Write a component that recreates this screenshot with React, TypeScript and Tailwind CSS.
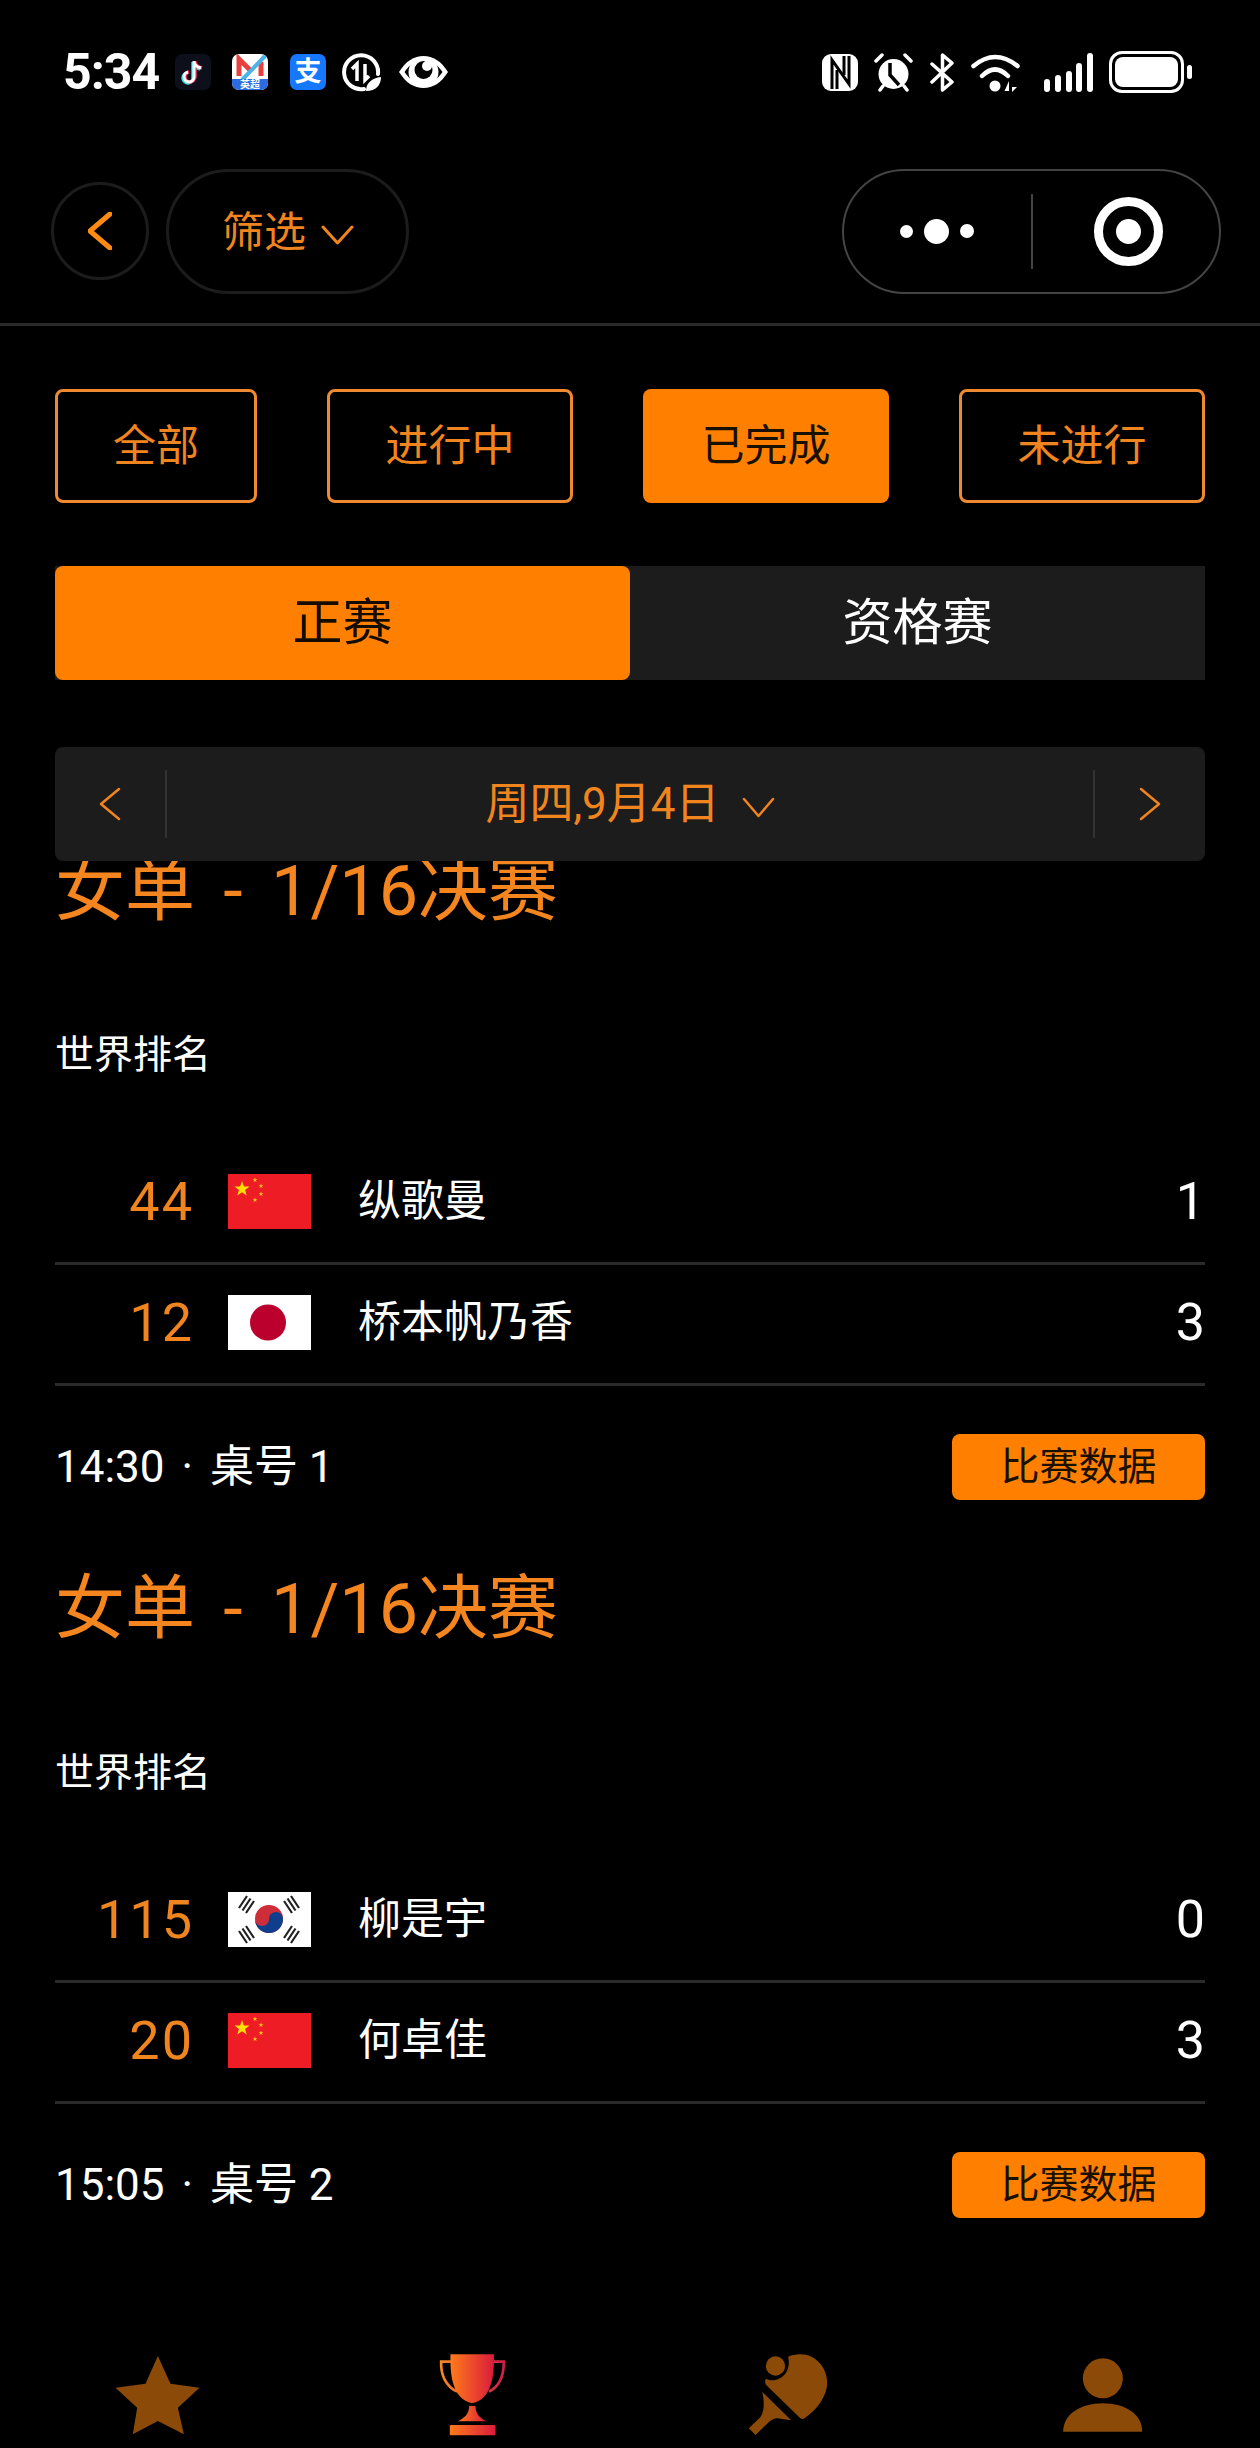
import React from 'react';

const sans = "font-['Roboto','Noto_Sans_CJK_SC',sans-serif]";

const starPoints = (cx: number, cy: number, r: number) => {
  const pts: string[] = [];
  for (let i = 0; i < 10; i++) {
    const rad = i % 2 === 0 ? r : r * 0.4;
    const a = (Math.PI / 5) * i - Math.PI / 2;
    pts.push(`${cx + rad * Math.cos(a)},${cy + rad * Math.sin(a)}`);
  }
  return pts.join(' ');
};

const ChinaFlag = () => (
  <svg width="83" height="55" viewBox="0 0 83 55" className="shrink-0 block">
    <rect width="83" height="55" fill="#ee1c25" />
    <polygon points={starPoints(14, 15, 8)} fill="#ffe000" />
    <polygon points={starPoints(27, 6, 2.6)} fill="#ffc21a" />
    <polygon points={starPoints(33, 12, 2.6)} fill="#ffc21a" />
    <polygon points={starPoints(33, 20, 2.6)} fill="#ffc21a" />
    <polygon points={starPoints(27, 26, 2.6)} fill="#ffc21a" />
  </svg>
);

const JapanFlag = () => (
  <svg width="83" height="55" viewBox="0 0 83 55" className="shrink-0 block">
    <rect width="83" height="55" fill="#fff" />
    <circle cx="40" cy="27.5" r="18" fill="#bc002d" />
  </svg>
);

const KoreaFlag = () => (
  <svg width="83" height="55" viewBox="0 0 83 55" className="shrink-0 block">
    <rect width="83" height="55" fill="#fff" />
    <circle cx="41" cy="27" r="14" fill="#cd2e3a" />
    <path d="M27 27a14 14 0 0 0 28 0c0-3.900-3.100-7-7-7s-7 3.100-7 7-3.100 7-7 7-7-3.100-7-7z" fill="#0f3f8c" />
    <g stroke="#222" strokeWidth="2.200">
      <path d="M12 17L20 5M15.500 19.500L23.500 7.500M19 22L27 10" transform="translate(-1 -1)" />
      <path d="M62 5L70 17M58.500 7.500L66.500 19.500M55 10L63 22" transform="translate(1 -1)" />
      <path d="M12 38L20 50M15.500 35.500L23.500 47.500M19 33L27 45" transform="translate(-1 1)" />
      <path d="M62 50L70 38M58.500 47.500L66.500 35.500M55 45L63 33" transform="translate(1 1)" />
    </g>
  </svg>
);

const flags = { cn: <ChinaFlag />, jp: <JapanFlag />, kr: <KoreaFlag /> };

type Player = { rank: string; flag: keyof typeof flags; name: string; score: string };
type Match = { time: string; table: string; players: Player[] };

const matches: Match[] = [
  {
    time: '14:30',
    table: '桌号 1',
    players: [
      { rank: '44', flag: 'cn', name: '纵歌曼', score: '1' },
      { rank: '12', flag: 'jp', name: '桥本帆乃香', score: '3' },
    ],
  },
  {
    time: '15:05',
    table: '桌号 2',
    players: [
      { rank: '115', flag: 'kr', name: '柳是宇', score: '0' },
      { rank: '20', flag: 'cn', name: '何卓佳', score: '3' },
    ],
  },
];

const Chevron = ({ dir, w, h, color = '#f0851f', sw = 3 }: { dir: 'left' | 'right' | 'down'; w: number; h: number; color?: string; sw?: number }) => {
  const d =
    dir === 'left'
      ? `M${w - 2} 2L2 ${h / 2}L${w - 2} ${h - 2}`
      : dir === 'right'
        ? `M2 2L${w - 2} ${h / 2}L2 ${h - 2}`
        : `M2 2L${w / 2} ${h - 2}L${w - 2} 2`;
  return (
    <svg width={w} height={h} viewBox={`0 0 ${w} ${h}`} fill="none" className="shrink-0">
      <path d={d} stroke={color} strokeWidth={sw} strokeLinecap="round" strokeLinejoin="round" />
    </svg>
  );
};

const StatusLeft = () => (
  <div className="flex items-center">
    <span className="w-[97px] text-[50px] leading-none font-bold text-white tracking-[-1px]">5:34</span>
    {/* tiktok */}
    <svg width="36" height="36" viewBox="0 0 36 36" fill="none" className="ml-[15px]">
      <rect width="36" height="36" rx="7" fill="#0d0f1a" />
      <path d="M19 7V23A5 5 0 1 1 13 18M19 7C19 11 22 13 26 14" stroke="#25e0e0" strokeWidth="3.500" transform="translate(-1 1)" />
      <path d="M19 7V23A5 5 0 1 1 13 18M19 7C19 11 22 13 26 14" stroke="#f0305a" strokeWidth="3.500" transform="translate(1 0)" />
      <path d="M19 7V23A5 5 0 1 1 13 18M19 7C19 11 22 13 26 14" stroke="#fff" strokeWidth="3" />
    </svg>
    {/* app with 英超 label */}
    <div className="ml-[21px] w-[36px] h-[36px] rounded-[7px] bg-white overflow-hidden flex flex-col relative">
      <svg width="36" height="25" viewBox="0 0 36 25" fill="none">
        <path d="M7 22V5L18 16" stroke="#e8403f" strokeWidth="5" />
        <path d="M29 22V8" stroke="#e8403f" strokeWidth="5" />
        <path d="M10 26L34 1" stroke="#48b4e8" strokeWidth="4" />
      </svg>
      <span className="flex-1 bg-[#2c6be0] text-white text-[10px] leading-[11px] font-bold text-center">英超</span>
    </div>
    {/* alipay */}
    <div className="ml-[22px] w-[36px] h-[36px] rounded-[7px] bg-[#1677ff] text-white text-[27px] leading-[36px] font-bold text-center">支</div>
    {/* data saver */}
    <svg width="39" height="39" viewBox="0 0 39 39" fill="none" className="ml-[16px]">
      <path d="M22 36A17 17 0 1 1 36 21" stroke="#fff" strokeWidth="4" strokeLinecap="round" />
      <path d="M15 28V11L10 16M23 11V27L27 23" stroke="#fff" strokeWidth="3.500" />
      <path d="M24 38C24 30 30 25 39 24C39 32 34 38 24 38Z" fill="#fff" />
    </svg>
    {/* eye */}
    <svg width="51" height="34" viewBox="0 0 51 34" className="ml-[17px]">
      <path d="M1 17C8 6 16 1 25.500 1S43 6 50 17C43 28 35 33 25.500 33S8 28 1 17Z" fill="#fff" />
      <path d="M6.500 17C12 9 18 5.500 25.500 5.500S39 9 44.500 17C39 25 33 28.500 25.500 28.500S12 25 6.500 17Z" fill="#000" />
      <circle cx="25.500" cy="17" r="15" fill="#fff" />
      <circle cx="25.500" cy="15" r="9" fill="#000" />
      <circle cx="29" cy="11" r="5" fill="#fff" />
    </svg>
  </div>
);

const StatusRight = () => (
  <div className="flex items-center">
    {/* nfc */}
    <svg width="36" height="37" viewBox="0 0 36 37" fill="none">
      <rect width="36" height="37" rx="9" fill="#fff" />
      <path d="M10 35V6L27 30V2" stroke="#000" strokeWidth="3" />
      <path d="M15 35V16M22 21V2" stroke="#000" strokeWidth="3" />
    </svg>
    {/* alarm */}
    <svg width="39" height="39" viewBox="0 0 39 39" fill="none" className="ml-[16px]">
      <circle cx="19.500" cy="21" r="15" fill="#fff" />
      <path d="M16 10V22L25 32" stroke="#000" strokeWidth="3.500" />
      <path d="M2 8L8 2M37 8L31 2M6 37L9 33M33 37L30 33" stroke="#fff" strokeWidth="3.500" strokeLinecap="round" />
    </svg>
    {/* bluetooth */}
    <svg width="25" height="39" viewBox="0 0 25 39" fill="none" className="ml-[17px]">
      <path d="M2 11L22 29L12.500 37V2L22 10L2 29" stroke="#fff" strokeWidth="3.500" strokeLinejoin="round" strokeLinecap="round" />
    </svg>
    {/* wifi */}
    <svg width="49" height="39" viewBox="0 0 49 39" fill="none" className="ml-[16px]">
      <path d="M2.500 13Q24 -5 46.500 13M11 23Q24 10 37 23" stroke="#fff" strokeWidth="4.500" strokeLinecap="round" />
      <circle cx="24" cy="33" r="5.500" fill="#fff" />
      <path d="M38 28V38H33.500ZM41 29V39L46 34H41Z" fill="#fff" />
    </svg>
    {/* signal */}
    <div className="ml-[24px] w-[49px] h-[39px] flex items-end justify-between">
      <div className="w-[6px] h-[13px] rounded-full bg-white" />
      <div className="w-[6px] h-[17px] rounded-full bg-white" />
      <div className="w-[6px] h-[21px] rounded-full bg-white" />
      <div className="w-[6px] h-[29px] rounded-full bg-white" />
      <div className="w-[6px] h-[39px] rounded-full bg-white" />
    </div>
    {/* battery */}
    <div className="ml-[16px] w-[75px] h-[42px] rounded-[13px] border-[3px] border-white p-[3px]">
      <div className="w-full h-full rounded-[8px] bg-white" />
    </div>
    <div className="ml-[3px] w-[5px] h-[14px] rounded-full bg-white" />
  </div>
);

const NavBar = () => (
  <div className="h-[182px] pb-[5px] flex items-center justify-between pl-[51px] pr-[39px] border-b-[3px] border-[#2a2a2a]">
    <div className="flex items-center">
      <div className="w-[98px] h-[98px] rounded-full border-[3px] border-[#1c1c1c] flex items-center justify-center">
        <Chevron dir="left" w={24} h={38} color="#ff8c12" sw={5} />
      </div>
      <div className="ml-[17px] w-[243px] h-[125px] rounded-full border-[3px] border-[#1c1c1c] flex items-center pl-[53px]">
        <span className="mt-[3px] text-[42px] leading-none text-[#f0851f]">筛选</span>
        <span className="ml-[15px] mt-[8px]">
          <Chevron dir="down" w={33} h={20} />
        </span>
      </div>
    </div>
    <div className="w-[379px] h-[125px] rounded-full border-2 border-[#444] flex items-center pl-[56px]">
      <div className="flex items-center gap-[11px]">
        <div className="w-[13px] h-[13px] rounded-full bg-white" />
        <div className="w-[25px] h-[25px] rounded-full bg-white" />
        <div className="w-[14px] h-[14px] rounded-full bg-white" />
      </div>
      <div className="ml-[57px] w-[2px] h-[75px] bg-[#444]" />
      <div className="ml-[61px] w-[69px] h-[69px] rounded-full border-[9px] border-white flex items-center justify-center">
        <div className="w-[25px] h-[25px] rounded-full bg-white" />
      </div>
    </div>
  </div>
);

const statusTabs = [
  { label: '全部', w: 'w-[202px]', active: false },
  { label: '进行中', w: 'w-[246px]', active: false },
  { label: '已完成', w: 'w-[246px]', active: true },
  { label: '未进行', w: 'w-[246px]', active: false },
];

const StatusTabs = () => (
  <div className="mt-[63px] mx-[55px] flex justify-between">
    {statusTabs.map((t) => (
      <div
        key={t.label}
        className={
          t.active
            ? `${t.w} h-[114px] rounded-[8px] bg-[#ff8000] text-[#1a1000] text-[43px] flex items-center justify-center`
            : `${t.w} h-[114px] rounded-[8px] border-[3px] border-[#f08a30] text-[#f0851f] text-[43px] flex items-center justify-center`
        }
      >
        {t.label}
      </div>
    ))}
  </div>
);

const Segments = () => (
  <div className="mt-[63px] mx-[55px] h-[114px] flex bg-[#1c1c1c] text-[50px]">
    <div className="w-[575px] rounded-[8px] bg-[#ff8000] text-[#140c00] flex items-center justify-center">正赛</div>
    <div className="flex-1 text-white flex items-center justify-center">资格赛</div>
  </div>
);

const DateBar = () => (
  <div className="relative z-10 mt-[67px] mx-[55px] h-[114px] rounded-[8px] bg-[#1c1c1c] flex items-center">
    <div className="w-[112px] h-[68px] flex items-center justify-center border-r-2 border-[#333]">
      <Chevron dir="left" w={22} h={34} sw={2.500} />
    </div>
    <div className="flex-1 flex items-center justify-center text-[#f0851f] text-[44px]">
      <span>周四,9月4日</span>
      <span className="ml-[22px] mt-[6px]">
        <Chevron dir="down" w={33} h={21} sw={2.500} />
      </span>
    </div>
    <div className="w-[112px] h-[68px] flex items-center justify-center border-l-2 border-[#333]">
      <Chevron dir="right" w={22} h={34} sw={2.500} />
    </div>
  </div>
);

const PlayerRow = ({ player }: { player: Player }) => (
  <div className="h-[121px] pb-[3px] flex items-center border-b-[3px] border-[#2a2a2a]">
    <span className="w-[139px] text-right text-[54px] leading-none text-[#f0851f] tracking-[2px]">{player.rank}</span>
    <span className="ml-[34px]">{flags[player.flag]}</span>
    <span className="ml-[47px] text-[43px] leading-none text-white">{player.name}</span>
    <span className="ml-auto text-[52px] leading-none text-white">{player.score}</span>
  </div>
);

const MatchCard = ({ match }: { match: Match }) => (
  <div className="mb-[59px]">
    <h2 className="h-[100px] flex items-center text-[70px] leading-none font-normal text-[#f5851f] [word-spacing:11px]">女单 - 1/16决赛</h2>
    <div className="mt-[84px] h-[60px] flex items-center text-[39px] text-white">世界排名</div>
    <div className="mt-[59px]">
      {match.players.map((p) => (
        <PlayerRow key={p.name} player={p} />
      ))}
    </div>
    <div className="mt-[48px] h-[66px] flex items-center justify-between">
      <span className="text-[44px] leading-none text-white">
        {match.time} <span className="mx-[6px]">·</span> {match.table}
      </span>
      <div className="w-[253px] h-[66px] rounded-[8px] bg-[#ff8000] text-[#1a1000] text-[39px] flex items-center justify-center">比赛数据</div>
    </div>
  </div>
);

const TabBar = () => (
  <div className="mt-[123px] h-[108px] grid grid-cols-4 justify-items-center">
    <svg width="100" height="108" viewBox="22.500 0 300 324">
      <path d="M172 45L210 128L297 140L232 200L250 280L172 240L97 280L110 200L45 140L135 128Z" fill="#8b4a08" />
    </svg>
    <svg width="100" height="108" viewBox="7.500 0 300 324" fill="none">
      <defs>
        <linearGradient id="cup" x1="0" x2="1" y1="0" y2="0">
          <stop offset="0" stopColor="#ff7a1a" />
          <stop offset="1" stopColor="#d91c3c" />
        </linearGradient>
        <linearGradient id="handles" gradientUnits="userSpaceOnUse" x1="58" x2="254" y1="0" y2="0">
          <stop offset="0" stopColor="#f58a24" />
          <stop offset="1" stopColor="#d01c48" />
        </linearGradient>
      </defs>
      <path d="M92 62H62C60 100 75 135 110 152M220 62H250C250 100 240 135 205 152" stroke="url(#handles)" strokeWidth="8" />
      <path d="M90 40H220C222 100 215 175 155 187C95 175 88 100 90 40Z" fill="url(#cup)" />
      <path d="M146 195C146 220 130 232 112 241H198C180 232 165 220 165 195Z" fill="url(#cup)" />
      <rect x="88" y="252" width="137" height="31" rx="3" fill="url(#cup)" />
    </svg>
    <svg width="100" height="108" viewBox="952.500 0 300 324">
      <circle cx="1065" cy="75" r="29" fill="#8b4a08" />
      <path d="M1103 48C1110 43 1125 40 1140 40C1185 40 1220 80 1220 125C1220 165 1190 205 1152 232C1148 235 1142 234 1138 230L1040 135C1033 128 1032 120 1036 113C1070 130 1115 100 1103 48Z" fill="#8b4a08" />
      <path d="M1025 152L1112 238L1070 232C1060 232 1050 238 1040 248L1005 282L985 262L1020 228C1032 210 1032 180 1025 152Z" fill="#8b4a08" />
    </svg>
    <svg width="100" height="108" viewBox="7.500 0 300 324">
      <circle cx="157" cy="112" r="60" fill="#8b4a08" />
      <path d="M38 272C38 220 90 187 157 187C225 187 275 220 275 272Z" fill="#8b4a08" />
    </svg>
  </div>
);

export default function App() {
  return (
    <div className={`w-[1260px] h-[2448px] bg-black overflow-hidden ${sans}`}>
      <div className="h-[144px] flex items-center justify-between pl-[63px] pr-[68px]">
        <StatusLeft />
        <StatusRight />
      </div>
      <NavBar />
      <StatusTabs />
      <Segments />
      <DateBar />
      <div className="-mt-[20px] mx-[55px]">
        {matches.map((m) => (
          <MatchCard key={m.time} match={m} />
        ))}
      </div>
      <TabBar />
    </div>
  );
}
